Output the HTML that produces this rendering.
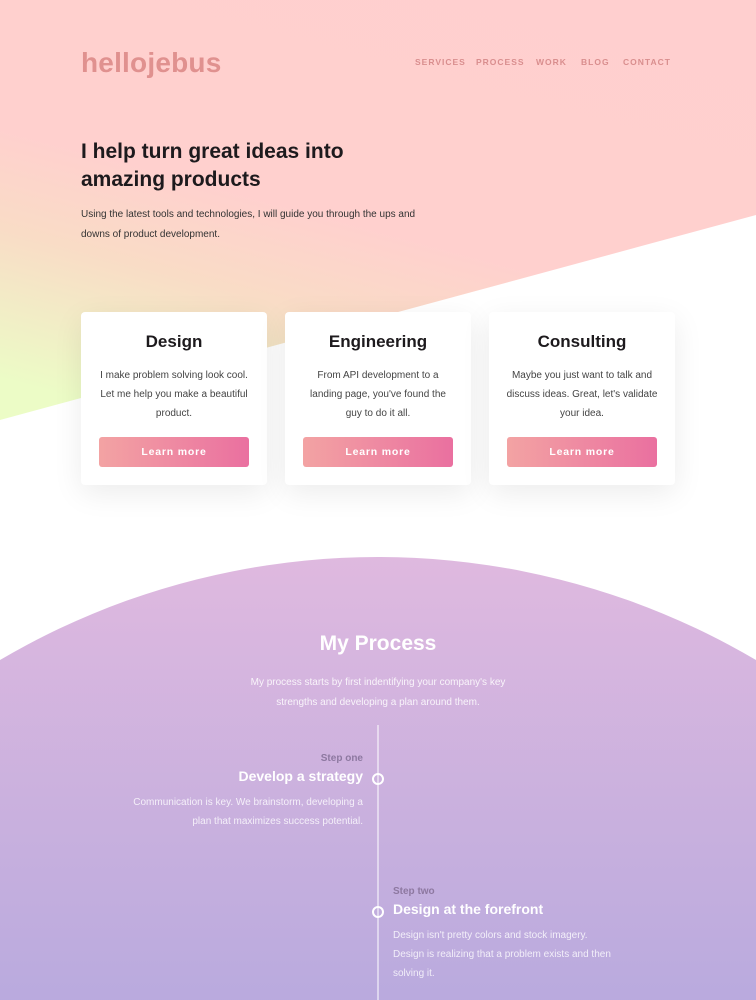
<!DOCTYPE html>
<html style="width:756px;height:1000px;overflow:hidden"><head><meta charset="utf-8"><style>
*{margin:0;padding:0;box-sizing:border-box}
body{width:756px;height:1000px;overflow:hidden;background:#fff;font-family:"Liberation Sans",sans-serif;position:relative}
.wrap{position:absolute;left:0;top:0;width:756px;height:1000px;overflow:hidden}
.hero{position:absolute;left:0;top:0;width:756px;height:430px;clip-path:polygon(0 0,756px 0,756px 215px,0 420px);background:linear-gradient(195deg,#ffcfcf 0%,#ffd0ce 52%,#f9dcc6 68%,#f2ecc6 80%,#ecfcc6 92%)}
.logo{position:absolute;left:81px;top:47px;font-size:28px;font-weight:bold;color:#e0918f;letter-spacing:0.2px}
.nav{position:absolute;top:57px;font-size:8.5px;color:#d98e8e;letter-spacing:1px;font-weight:bold}
h1{position:absolute;left:81px;top:138px;font-size:21px;line-height:28px;font-weight:bold;color:#1d1a1d}
.sub{position:absolute;left:81px;top:205px;font-size:10px;line-height:20px;color:#333;width:345px}
.card{position:absolute;top:312px;width:186px;height:173px;background:#fff;border-radius:4px;box-shadow:0 8px 30px rgba(0,0,0,0.08);text-align:center}
.card h2{font-size:17px;margin-top:20px;color:#1d1a1d}
.card p{font-size:10px;line-height:19px;color:#444;margin:14px 16px 0}
.btn{position:absolute;left:18px;top:125px;width:150px;height:30px;border-radius:3px;background:linear-gradient(90deg,#f3a3a3,#ea70a0);color:#fff;font-weight:bold;font-size:10.5px;line-height:30px;letter-spacing:0.8px}
.arc{position:absolute;left:-367px;top:557px;width:1490px;height:1490px;border-radius:50%;background:linear-gradient(#dfb9df 0%,#b9aade 30%,#a89edc 60%)}
.pt{position:absolute;left:0;width:756px;text-align:center;color:#fff}
.line{position:absolute;left:377px;top:725px;width:2px;height:275px;background:rgba(255,255,255,0.5)}
.dot{position:absolute;width:12px;height:12px;border-radius:50%;border:2.5px solid #fff;left:372px}
.s{position:absolute;color:#fff}
</style></head><body><div class="wrap">
<div class="hero"></div>
<div class="logo">hellojebus</div>
<div class="nav" style="left:415px">SERVICES</div>
<div class="nav" style="left:476px">PROCESS</div>
<div class="nav" style="left:536px">WORK</div>
<div class="nav" style="left:581px">BLOG</div>
<div class="nav" style="left:623px">CONTACT</div>
<h1>I help turn great ideas into<br>amazing products</h1>
<div class="sub">Using the latest tools and technologies, I will guide you through the ups and downs of product development.</div>
<div class="arc"></div>
<div class="card" style="left:81px"><h2>Design</h2><p>I make problem solving look cool. Let me help you make a beautiful product.</p><div class="btn">Learn more</div></div>
<div class="card" style="left:285px"><h2>Engineering</h2><p>From API development to a landing page, you've found the guy to do it all.</p><div class="btn">Learn more</div></div>
<div class="card" style="left:489px"><h2>Consulting</h2><p>Maybe you just want to talk and discuss ideas. Great, let's validate your idea.</p><div class="btn">Learn more</div></div>
<div class="pt" style="top:632px;font-size:21px;font-weight:bold">My Process</div>
<div class="pt" style="top:673px;font-size:10px;line-height:20px;color:rgba(255,255,255,0.85)">My process starts by first indentifying your company's key<br>strengths and developing a plan around them.</div>
<div class="line"></div>
<div class="dot" style="top:773px"></div>
<div class="dot" style="top:906px"></div>
<div class="s" style="right:393px;top:753px;font-size:10px;font-weight:bold;color:#8d78a0;text-align:right">Step one</div>
<div class="s" style="right:393px;top:768px;font-size:14px;font-weight:bold;text-align:right">Develop a strategy</div>
<div class="s" style="right:393px;top:793px;font-size:10px;line-height:19px;text-align:right;color:rgba(255,255,255,0.8);width:240px">Communication is key. We brainstorm, developing a plan that maximizes success potential.</div>
<div class="s" style="left:393px;top:886px;font-size:10px;font-weight:bold;color:#8d78a0">Step two</div>
<div class="s" style="left:393px;top:901px;font-size:14px;font-weight:bold">Design at the forefront</div>
<div class="s" style="left:393px;top:926px;font-size:10px;line-height:19px;color:rgba(255,255,255,0.8);width:225px">Design isn't pretty colors and stock imagery. Design is realizing that a problem exists and then solving it.</div>
</div></body></html>
